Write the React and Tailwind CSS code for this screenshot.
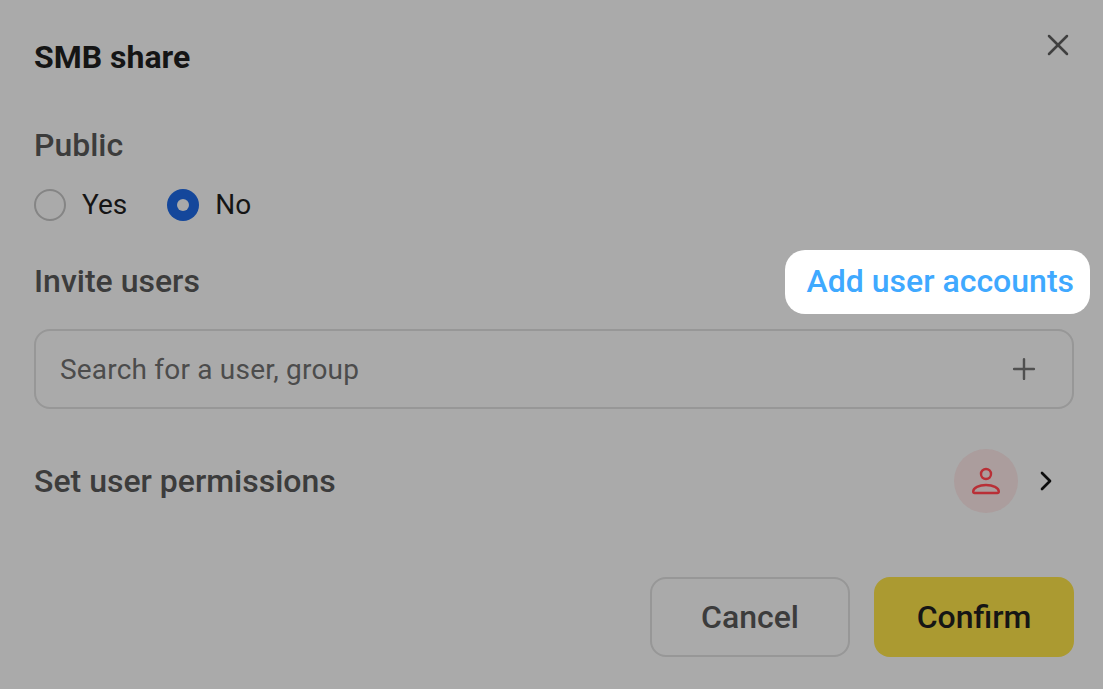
import { Plus, X, ChevronRight } from 'lucide-react';

function Radio({ checked, label }) {
  return (
    <label className="flex items-center gap-4">
      {checked ? (
        <span className="w-8 h-8 rounded-full bg-[#14479b] flex items-center justify-center">
          <span className="w-3 h-3 rounded-full bg-[#a9a9a9]" />
        </span>
      ) : (
        <span className="w-8 h-8 rounded-full border-2 border-[#858585]" />
      )}
      <span className="text-[28px] leading-8 text-[#151515]">{label}</span>
    </label>
  );
}

export default function App() {
  return (
    <div className="w-[1103px] h-[689px] overflow-hidden bg-[#aaaaaa] pl-[34px] pr-[29px] pt-[37px] font-['Roboto',sans-serif]">
      {/* Header */}
      <div className="flex justify-between h-10">
        <h1 className="text-[32px] leading-10 font-bold text-[#151515]">SMB share</h1>
        <button className="-mt-[10px] -mr-[2px] h-9 text-[#404040]">
          <X size={36} strokeWidth={1.7} />
        </button>
      </div>

      {/* Public */}
      <p className="mt-[48px] text-[32px] leading-10 font-medium text-[#3c3c3c]">Public</p>
      <div className="mt-6 flex items-center gap-10">
        <Radio label="Yes" />
        <Radio checked label="No" />
      </div>

      {/* Invite users */}
      <div className="mt-[29px] flex items-center justify-between">
        <p className="mb-[2px] text-[32px] leading-10 font-medium text-[#3c3c3c]">Invite users</p>
        <a className="h-16 -mr-4 pl-[22px] pr-4 pb-[2px] flex items-center rounded-[20px] bg-white text-[32px] font-medium text-[#3fa9ff]">
          Add user accounts
        </a>
      </div>
      <div className="mt-[15px] h-20 pl-6 pr-[31px] flex items-center justify-between rounded-[16px] border-2 border-[#979797]">
        <span className="pt-[2px] text-[28px] tracking-[0.2px] text-[#4c4c4c]">Search for a user, group</span>
        <Plus size={34} strokeWidth={1.7} className="text-[#505050]" />
      </div>

      {/* Permissions */}
      <div className="mt-10 h-16 flex items-center justify-between">
        <p className="text-[32px] leading-10 font-medium text-[#3c3c3c]">Set user permissions</p>
        <div className="flex items-center">
          <div className="w-16 h-16 rounded-full bg-[#ab9d9d] flex items-center justify-center">
            <svg width="32" height="32" viewBox="0 0 32 32" fill="none" stroke="#b92f36" strokeWidth="2.4">
              <circle cx="16" cy="9" r="5" />
              <path d="M3.200 26.500c0-3.800 5.800-6.500 12.800-6.500s12.800 2.700 12.800 6.500c0 1-.6 1.500-1.500 1.500H4.700c-.9 0-1.500-.5-1.500-1.500z" />
            </svg>
          </div>
          <ChevronRight size={32} strokeWidth={2} className="ml-3 mr-3 text-[#0d0d0d]" />
        </div>
      </div>

      {/* Footer */}
      <div className="mt-16 flex justify-end gap-6">
        <button className="w-[200px] h-20 rounded-[16px] border-2 border-[#979797] text-[32px] font-medium text-[#3c3c3c]">
          Cancel
        </button>
        <button className="w-[200px] h-20 rounded-[16px] bg-[#ab9a31] text-[32px] font-medium text-[#151515]">
          Confirm
        </button>
      </div>
    </div>
  );
}
